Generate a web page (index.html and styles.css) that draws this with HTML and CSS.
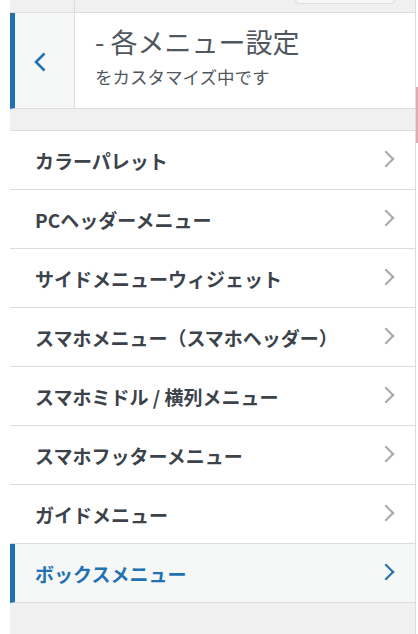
FILE: index.html
```html
<!DOCTYPE html>
<html lang="ja">
<head>
  <meta charset="UTF-8">
  <title>カスタマイズ - 各メニュー設定</title>
  <link rel="stylesheet" href="styles.css">
</head>
<body>
  <div class="panel">
    <div class="topbar">
      <div class="topbar-cell"></div>
      <button class="topbar-btn" type="button"></button>
    </div>

    <div class="section-head">
      <button class="back" type="button" aria-label="戻る">
        <svg width="14" height="22" viewBox="0 0 14 22"><path d="M11.5 2.5 L3 11 L11.5 19.5" fill="none" stroke="#2271b1" stroke-width="2.6"/></svg>
      </button>
      <div class="head-text">
        <h2 class="head-title">- 各メニュー設定</h2>
        <p class="head-sub">をカスタマイズ中です</p>
      </div>
    </div>

    <ul class="menu-list">
      <li class="menu-item">カラーパレット<span class="chev"></span></li>
      <li class="menu-item">PCヘッダーメニュー<span class="chev"></span></li>
      <li class="menu-item">サイドメニューウィジェット<span class="chev"></span></li>
      <li class="menu-item">スマホメニュー（スマホヘッダー）<span class="chev"></span></li>
      <li class="menu-item">スマホミドル / 横列メニュー<span class="chev"></span></li>
      <li class="menu-item">スマホフッターメニュー<span class="chev"></span></li>
      <li class="menu-item">ガイドメニュー<span class="chev"></span></li>
      <li class="menu-item active">ボックスメニュー<span class="chev"></span></li>
    </ul>

    <div class="scroll-thumb"></div>
  </div>
</body>
</html>
```

FILE: styles.css
```css
body {
  margin: 0;
  background: #fff;
  font-family: "Noto Sans CJK JP", "Noto Sans", sans-serif;
  overflow: hidden;
}
.panel {
  position: relative;
  margin-left: 10px;
  width: 405px;
  height: 634px;
  background: #f0f0f1;
  border-right: 1px solid #dcdcde;
}
.topbar {
  display: flex;
  height: 12px;
  border-bottom: 1px solid #dcdcde;
  overflow: hidden;
}
.topbar-cell {
  width: 64px;
  border-right: 1px solid #dcdcde;
}
.topbar-btn {
  margin: -20px 20px 0 auto;
  width: 100px;
  height: 24px;
  border: 1px solid #dcdcde;
  border-radius: 4px;
  background: #f6f7f7;
}
.section-head {
  display: flex;
  height: 95px;
  background: #fff;
  border-left: 5px solid #2271b1;
  border-bottom: 1px solid #dcdcde;
}
.back {
  width: 60px;
  border: none;
  border-right: 1px solid #dcdcde;
  background: #f6f7f7;
  padding: 0 0 0 18px;
  display: flex;
  align-items: center;
}
.back svg {
  display: block;
  margin-top: 2px;
}
.head-text {
  padding: 11px 0 0 20px;
}
.head-title {
  margin: 0;
  font-size: 27px;
  font-weight: 400;
  line-height: 36px;
  color: #50575e;
}
.head-sub {
  margin: 4px 0 0;
  font-size: 17.5px;
  line-height: 26px;
  color: #50575e;
}
.menu-list {
  list-style: none;
  margin: 21px 0 0;
  padding: 0;
  background: #fff;
  border-top: 1px solid #dcdcde;
}
.menu-item {
  position: relative;
  display: flex;
  align-items: center;
  height: 58px;
  padding-left: 25px;
  border-bottom: 1px solid #dcdcde;
  font-size: 19px;
  font-weight: 700;
  color: #3c434a;
}
.chev {
  position: absolute;
  right: 23px;
  top: 22px;
  width: 12px;
  height: 12px;
  border-top: 2.5px solid #a7aaad;
  border-right: 2.5px solid #a7aaad;
  transform: rotate(45deg);
  box-sizing: border-box;
}
.menu-item.active {
  background: #f6f7f7;
  color: #2271b1;
  border-left: 5px solid #2271b1;
  padding-left: 20px;
}
.menu-item.active .chev {
  border-color: #2271b1;
}
.scroll-thumb {
  position: absolute;
  right: -4px;
  top: 87px;
  width: 3px;
  height: 56px;
  background: #e3a9b1;
}
```
